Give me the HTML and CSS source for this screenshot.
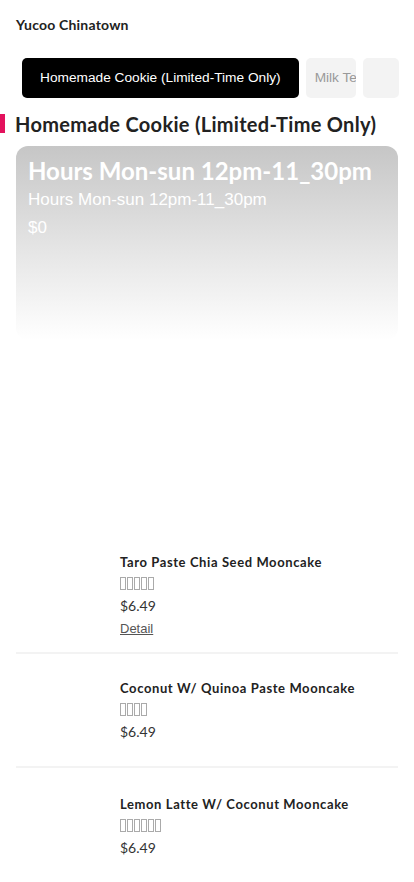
FILE: index.html
```html
<!DOCTYPE html>
<html lang="en">

<head>
    <meta charset="UTF-8">
    <meta name="viewport" content="width=device-width, initial-scale=1.0">
    <title>Yucoo Chinatown</title>
    <link rel="stylesheet" href="styles.css">
</head>

<body>
    <header class="top">Yucoo Chinatown</header>

    <!-- 分类标签 -->
    <nav class="tabs">
        <div class="tab active">Homemade Cookie (Limited-Time Only)</div>
        <div class="tab small">Milk Tea</div>
        <div class="tab tiny"></div>
    </nav>

    <h2 class="section-title">Homemade Cookie (Limited-Time Only)</h2>

    <div class="banner">
        <div class="banner-title">Hours Mon-sun 12pm-11_30pm</div>
        <div class="banner-sub">Hours Mon-sun 12pm-11_30pm</div>
        <div class="banner-sub">$0</div>
    </div>

    <!-- 商品列表 -->
    <div class="list">
        <div class="item">
            <div class="pic"></div>
            <div class="info">
                <div class="name">Taro Paste Chia Seed Mooncake</div>
                <div class="stars"><i></i><i></i><i></i><i></i><i></i></div>
                <div class="price">$6.49</div>
                <a class="detail" href="#">Detail</a>
            </div>
        </div>
        <div class="item">
            <div class="pic"></div>
            <div class="info">
                <div class="name">Coconut W/ Quinoa Paste Mooncake</div>
                <div class="stars"><i></i><i></i><i></i><i></i></div>
                <div class="price">$6.49</div>
            </div>
        </div>
        <div class="item">
            <div class="pic"></div>
            <div class="info">
                <div class="name">Lemon Latte W/ Coconut Mooncake</div>
                <div class="stars"><i></i><i></i><i></i><i></i><i></i><i></i></div>
                <div class="price">$6.49</div>
            </div>
        </div>
    </div>
</body>

</html>
```

FILE: styles.css
```css
body {
    margin: 0;
    font-family: Lato, "Liberation Sans", sans-serif;
    color: #222;
    background: #fff;
}

.top {
    padding: 16px 16px 0;
    height: 18px;
    font-size: 14px;
    font-weight: 700;
    line-height: 18px;
    letter-spacing: 0.2px;
}

/* 标签栏 */
.tabs {
    display: flex;
    gap: 7px;
    padding: 24px 16px 0 22px;
    overflow: hidden;
}
.tab {
    flex: none;
    height: 40px;
    line-height: 40px;
    border-radius: 5px;
    font-family: "Liberation Sans", Arial, sans-serif;
    font-size: 13.7px;
    padding: 0 18px;
    background: #f3f3f3;
    color: #999;
    white-space: nowrap;
    overflow: hidden;
}
.tab.active {
    background: #000;
    color: #fff;
}
.tab.small {
    width: 50px;
    padding: 0 0 0 9px;
    box-sizing: border-box;
}
.tab.tiny {
    width: 36px;
    padding: 0;
}

/* 分类标题，左侧红条 */
.section-title {
    position: relative;
    margin: 15px 0 0;
    padding-left: 15px;
    font-size: 20px;
    font-weight: 700;
    line-height: 22px;
    height: 22px;
    letter-spacing: 0.3px;
}
.section-title::before {
    content: "";
    position: absolute;
    left: 0;
    top: 1px;
    width: 5px;
    height: 19px;
    background: #e3125d;
}

/* 横幅 */
.banner {
    margin: 11px 16px 0;
    height: 194px;
    border-radius: 12px;
    padding: 10px 12px;
    box-sizing: border-box;
    background: linear-gradient(#c6c6c6, #e6e6e6 55%, #fff);
    color: #fff;
}
.banner-title {
    font-size: 24px;
    font-weight: 700;
    line-height: 30px;
}
.banner-sub {
    font-family: "Liberation Sans", Arial, sans-serif;
    font-size: 17px;
    line-height: 28px;
}

/* 列表 */
.list {
    margin-top: 195px;
    padding: 0 16px;
}
.item {
    display: flex;
    padding: 18px 0 23px;
    border-bottom: 2px solid #f3f3f3;
}
.item + .item {
    padding-top: 25px;
}
.item:last-child {
    padding-top: 27px;
    border-bottom: none;
}
.pic {
    width: 88px;
    flex: none;
    margin-right: 16px;
}
.info {
    flex: 1;
}
.name {
    font-size: 13px;
    font-weight: 700;
    line-height: 18px;
    letter-spacing: 0.6px;
}
.stars {
    height: 24px;
    display: flex;
    align-items: center;
    gap: 1px;
}
.stars i {
    width: 4px;
    height: 11px;
    border: 1px solid #aaa;
}
.price {
    font-size: 14px;
    line-height: 22px;
    color: #333;
}
.detail {
    display: block;
    margin-bottom: -12px;
    font-family: "Liberation Sans", Arial, sans-serif;
    font-size: 13px;
    line-height: 24px;
    color: #555;
}
```
